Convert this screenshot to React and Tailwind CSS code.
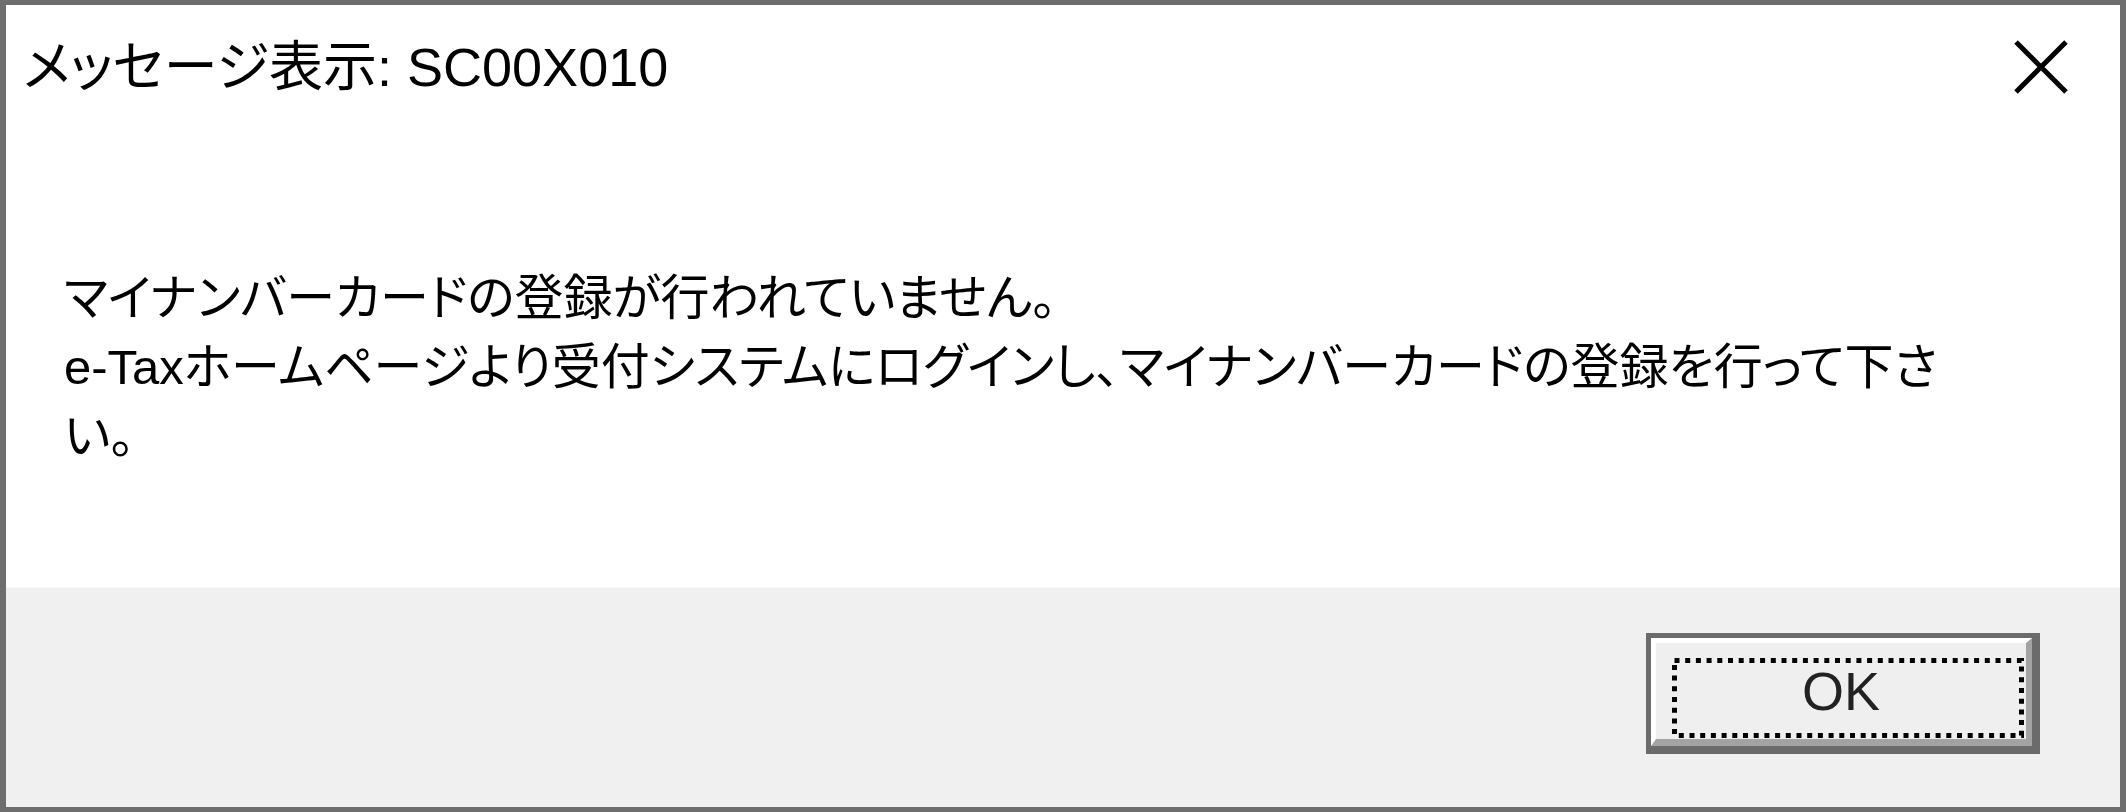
import React from 'react';

// Windows message box: "メッセージ表示: SC00X010"
const CloseIcon = () => (
  <svg width="54" height="54" viewBox="0 0 54 54" className="block">
    <path d="M2 2 L52 52 M52 2 L2 52" stroke="#000" strokeWidth="5" fill="none" />
  </svg>
);

const FocusRect = () => (
  <svg className="absolute left-[21px] top-[20px]" width="352" height="80" viewBox="0 0 352 80">
    <rect x="2.5" y="2.5" width="347" height="75" fill="none" stroke="#000" strokeWidth="5" strokeDasharray="5 5.7" />
  </svg>
);

export default function App() {
  return (
    <div className="w-[2126px] h-[812px] bg-white flex flex-col border-[#6e6e6e] border-t-[5px] border-l-[6px] border-r-[6px] border-b-[5px] font-['Liberation_Sans','Noto_Sans_CJK_JP',sans-serif] text-black [font-feature-settings:'palt']">
      {/* white area: title + message */}
      <div className="h-[582px] bg-white flex flex-col">
        <div className="flex items-center justify-between pt-[22px] pl-[17px] pr-[52px]">
          <span className="text-[54px] leading-[80px] whitespace-nowrap">メッセージ表示: SC00X010</span>
          <CloseIcon />
        </div>

        <div className="mt-[157px] pl-[58px] text-[49px] leading-[69px] whitespace-nowrap">
          マイナンバーカードの登録が行われていません。
          <br />
          e-Taxホームページより受付システムにログインし、マイナンバーカードの登録を行って下さ
          <br />
          い。
        </div>
      </div>

      {/* button bar */}
      <div className="flex-1 bg-[#f0f0f0] border-t border-[#f7f7f7] flex justify-end items-start pt-[45px] pr-[80px]">
        <button className="relative w-[394px] h-[121px] border-[#6b6b6b] border-t-[5px] border-l-[5px] border-r-[8px] border-b-[8px]">
          <div className="w-full h-full bg-[#efefef] border-white border-t-[5px] border-l-[5px] border-r-[6px] border-r-[#a3a3a3] border-b-[7px] border-b-[#a3a3a3] flex items-center justify-center">
            <span className="text-[54px] leading-none text-[#222] font-['Liberation_Sans',sans-serif]">OK</span>
          </div>
          <FocusRect />
        </button>
      </div>
    </div>
  );
}
